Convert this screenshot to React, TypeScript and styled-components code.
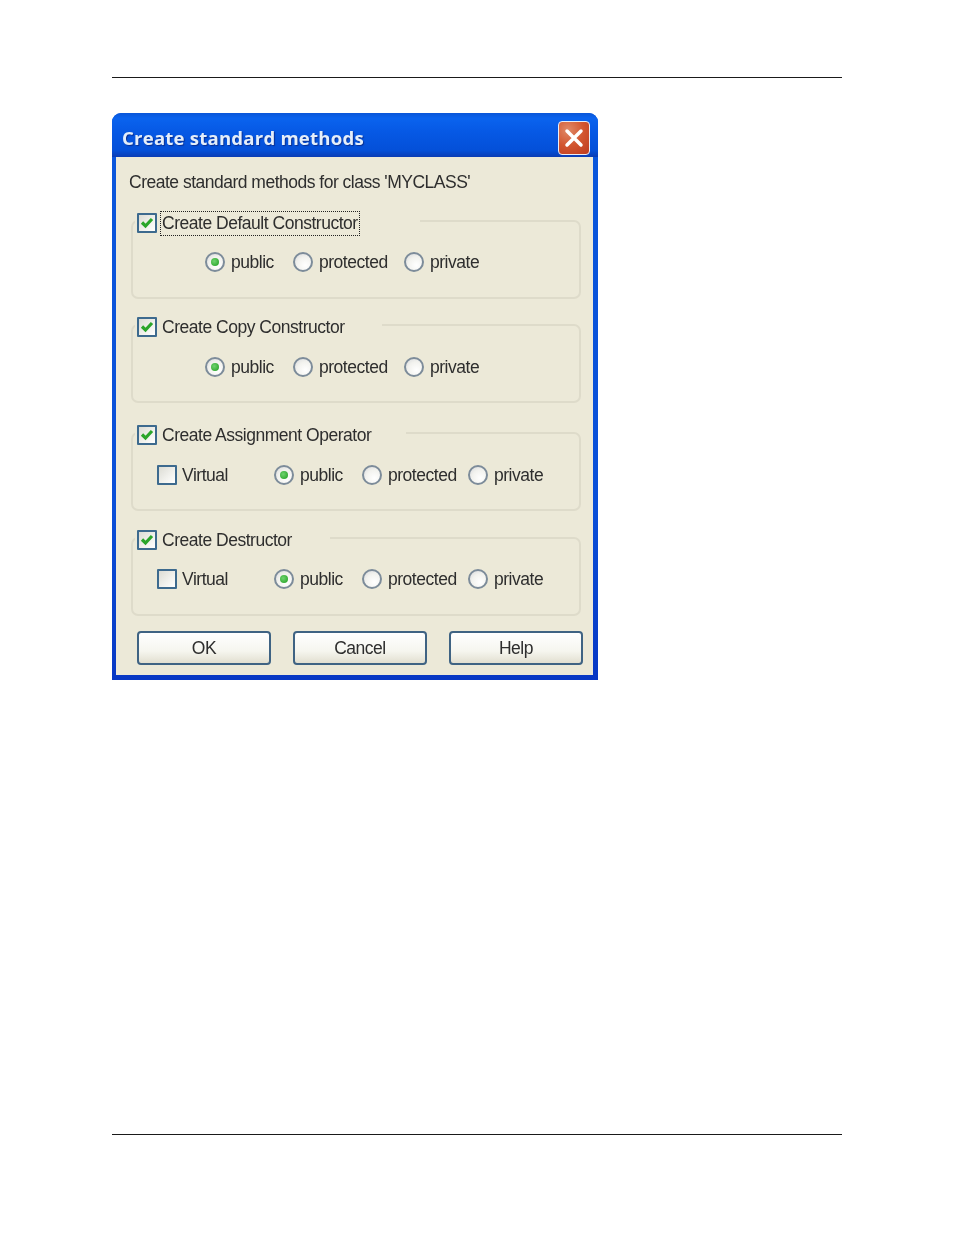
import React from 'react';
import styled, { createGlobalStyle } from 'styled-components';

const GlobalStyle = createGlobalStyle`
  html, body {
    margin: 0;
    background: #fff;
  }
`;

const Page = styled.div`
  box-sizing: border-box;
  height: 1235px;
  padding: 77px 112px 0;
  display: flex;
  flex-direction: column;
  align-items: flex-start;
`;

const Rule = styled.hr`
  width: 730px;
  height: 1px;
  margin: 0;
  border: 0;
  background: #1a1a1a;
`;

const FooterRule = styled(Rule)`
  margin-top: 454px;
`;

const Window = styled.div`
  box-sizing: border-box;
  width: 486px;
  height: 567px;
  margin-top: 35px;
  display: flex;
  flex-direction: column;
  border-radius: 9px 9px 0 0;
  background: linear-gradient(180deg, #0a57dc 0%, #0a4fd8 70%, #0838c4 100%);
  overflow: hidden;
  filter: blur(0.35px);
  font-family: 'Liberation Sans', Arial, sans-serif;
  font-size: 17.5px;
  letter-spacing: -0.48px;
  color: #2e2e2e;
`;

const TitleBar = styled.div`
  box-sizing: border-box;
  height: 44px;
  flex: none;
  display: flex;
  align-items: center;
  justify-content: space-between;
  padding: 4px 8px 0 10px;
  background: linear-gradient(180deg, #0a56d8 0%, #0a63ee 12%, #0658e4 45%, #0450d8 85%, #0a3cb4 100%);
`;

const Title = styled.div`
  font-family: 'Open Sans', sans-serif;
  font-weight: 700;
  font-size: 18.6px;
  letter-spacing: 0.2px;
  color: #e4eefa;
  text-shadow: 1px 1px 1px #0a2f90;
`;

const CloseButton = styled.div`
  box-sizing: border-box;
  width: 32px;
  height: 34px;
  margin-top: 2px;
  display: flex;
  align-items: center;
  justify-content: center;
  border: 1.5px solid #e8eef8;
  border-radius: 4px;
  background: radial-gradient(circle at 30% 25%, #e08a68 0%, #d2552f 50%, #bd3a1f 100%);
`;

const Body = styled.div`
  flex: 1;
  margin: 0 5px 5px 4px;
  padding: 15px 0 0 13px;
  background: #ece9d8;
`;

const Intro = styled.div`
  height: 20px;
  line-height: 20px;
  margin-bottom: 17px;
  letter-spacing: -0.5px;
`;

const Group = styled.fieldset<{ $gap: number }>`
  box-sizing: border-box;
  width: 450px;
  height: 90px;
  margin: ${(p) => p.$gap}px 0 0 2px;
  padding: 0;
  border: 2px solid #dedbca;
  border-radius: 7px;
  min-inline-size: 0;
`;

const Legend = styled.legend<{ $width: number }>`
  box-sizing: border-box;
  width: ${(p) => p.$width}px;
  height: 24px;
  margin-left: 2px;
  padding: 4px 0 0 2px;
`;

const Row = styled.div<{ $left: number; $top: number }>`
  display: flex;
  align-items: center;
  height: 20px;
  margin-top: ${(p) => p.$top}px;
  padding-left: ${(p) => p.$left}px;
`;

const Option = styled.label<{ $width?: number; $gap?: number }>`
  display: flex;
  align-items: center;
  flex: none;
  gap: ${(p) => p.$gap ?? 6}px;
  width: ${(p) => (p.$width ? `${p.$width}px` : 'auto')};
  height: 20px;
`;

const Focus = styled.span`
  outline: 1px dotted #222;
  outline-offset: 1px;
`;

const Box = styled.span`
  box-sizing: border-box;
  flex: none;
  width: 20px;
  height: 20px;
  display: flex;
  align-items: center;
  justify-content: center;
  border: 2px solid #3d6a8e;
  border-radius: 1px;
  background: linear-gradient(135deg, #dcdcd4 0%, #f2f2ee 60%, #ffffff 100%);
`;

const Circle = styled.span`
  box-sizing: border-box;
  flex: none;
  width: 20px;
  height: 20px;
  display: flex;
  align-items: center;
  justify-content: center;
  border: 2px solid #7d8c9a;
  border-radius: 50%;
  background: radial-gradient(circle at 65% 70%, #ffffff 0%, #f2f2ee 55%, #d4d6da 100%);
`;

const Dot = styled.span`
  width: 8px;
  height: 8px;
  border-radius: 50%;
  background: radial-gradient(circle at 40% 40%, #6fd36f 0%, #2ea82e 80%);
`;

const ButtonBar = styled.div`
  display: flex;
  gap: 22px;
  margin: 15px 0 0 8px;
`;

const Button = styled.button`
  box-sizing: border-box;
  width: 134px;
  height: 34px;
  padding: 0;
  border: 2px solid #3f6383;
  border-radius: 4px;
  background: linear-gradient(180deg, #ffffff 0%, #f6f6ef 60%, #e2dfd0 100%);
  font: inherit;
  letter-spacing: inherit;
  color: inherit;
`;

const Check = () => (
  <svg width="14" height="14" viewBox="0 0 14 14">
    <path d="M2 6.5 L5.5 10 L12 3" fill="none" stroke="#2aa52a" strokeWidth="3.2" />
  </svg>
);

const CheckOption = ({ label, checked, width, focus }: { label: string; checked?: boolean; width?: number; focus?: boolean }) => (
  <Option $width={width} $gap={5}>
    <Box>{checked && <Check />}</Box>
    {focus ? <Focus>{label}</Focus> : <span>{label}</span>}
  </Option>
);

const RadioOption = ({ label, checked, width }: { label: string; checked?: boolean; width?: number }) => (
  <Option $width={width}>
    <Circle>{checked && <Dot />}</Circle>
    <span>{label}</span>
  </Option>
);

const groups = [
  { title: 'Create Default Constructor', legend: 285, gap: 0, top: 19, focus: true, virtual: false },
  { title: 'Create Copy Constructor', legend: 247, gap: 14, top: 20, focus: false, virtual: false },
  { title: 'Create Assignment Operator', legend: 271, gap: 18, top: 20, focus: false, virtual: true },
  { title: 'Create Destructor', legend: 195, gap: 15, top: 19, focus: false, virtual: true },
];

export default function App() {
  return (
    <Page>
      <GlobalStyle />
      <Rule />
      <Window>
        <TitleBar>
          <Title>Create standard methods</Title>
          <CloseButton>
            <svg width="20" height="20" viewBox="0 0 20 20">
              <path d="M3 3 L17 17 M17 3 L3 17" stroke="#fff" strokeWidth="3.5" strokeLinecap="round" />
            </svg>
          </CloseButton>
        </TitleBar>
        <Body>
          <Intro>Create standard methods for class 'MYCLASS'</Intro>
          {groups.map((g) => (
            <Group key={g.title} $gap={g.gap}>
              <Legend $width={g.legend}>
                <CheckOption label={g.title} checked focus={g.focus} />
              </Legend>
              <Row $left={g.virtual ? 24 : 72} $top={g.top}>
                {g.virtual && <CheckOption label="Virtual" width={117} />}
                <RadioOption label="public" checked width={88} />
                <RadioOption label="protected" width={g.virtual ? 106 : 111} />
                <RadioOption label="private" />
              </Row>
            </Group>
          ))}
          <ButtonBar>
            <Button>OK</Button>
            <Button>Cancel</Button>
            <Button>Help</Button>
          </ButtonBar>
        </Body>
      </Window>
      <FooterRule />
    </Page>
  );
}
